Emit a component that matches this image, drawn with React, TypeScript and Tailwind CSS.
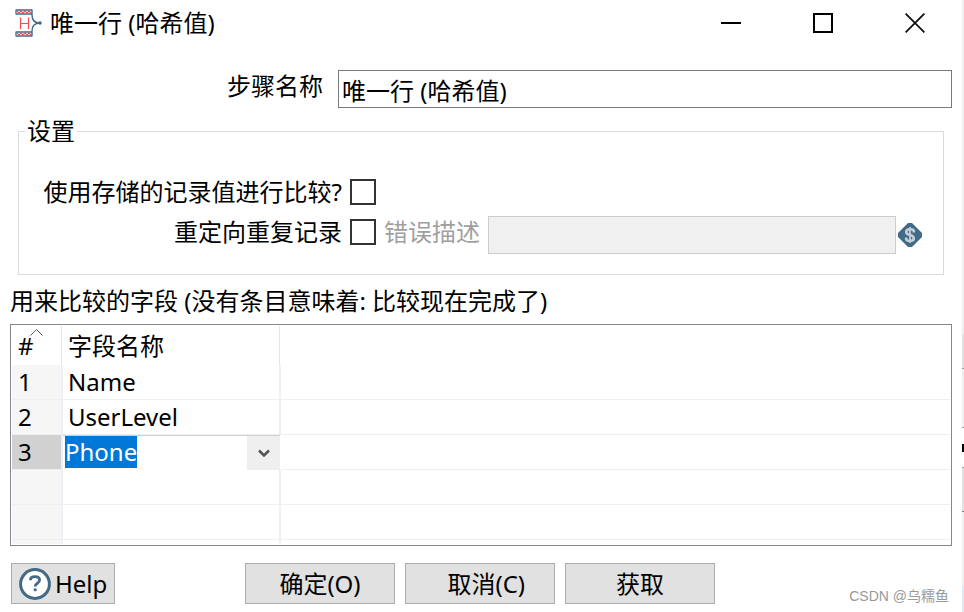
import { useEffect, useRef, useState } from "react";
import type { ReactNode } from "react";

const fields = ["Name", "UserLevel"];

const StepIcon = () => (
  <svg width="28" height="28" viewBox="0 0 28 28" fill="none" aria-hidden="true">
    <path d="M1 1H17M1 5H17M1 23H17M1 27H17M1 0.5V5.5M1 22.5V27.5" stroke="#426a86" strokeWidth="1.3" />
    <path d="M2 2L4 4L6 2L8 4L10 2L12 4L14 2L16 4" stroke="#fb4b50" strokeWidth="1.1" />
    <path d="M2 24L4 26L6 24L8 26L10 24L12 26L14 24L16 26" stroke="#fb4b50" strokeWidth="1.1" />
    <path d="M17 0.5V6C17 11 19 14 25 14C19 14 17 17 17 22V27.5" stroke="#426a86" strokeWidth="1.4" />
    <circle cx="25" cy="14" r="1.8" fill="#426a86" />
    <path d="M5.5 8.5V20M13.5 8.5V20M5.5 14.5H13.5" stroke="#fb4b50" strokeWidth="1.2" />
  </svg>
);

const VariableIcon = () => (
  <svg width="24" height="24" viewBox="0 0 24 24" fill="none" aria-hidden="true">
    <path d="M10 0H14L24 10V14L14 24H10L0 14V10Z" fill="#426a86" />
    <path
      d="M15.8 9.6V8Q15.8 6.2 12 6.2Q8.2 6.2 8.2 9Q8.2 11.2 12 12Q15.8 12.8 15.8 15.2Q15.8 17.8 12 17.8Q8.2 17.8 8.2 16V14.6"
      stroke="#c3ced8"
      strokeWidth="2.6"
    />
    <path d="M12 4V20" stroke="#c3ced8" strokeWidth="1.8" />
  </svg>
);

const HelpIcon = () => (
  <svg width="32" height="32" viewBox="0 0 32 32" fill="none" aria-hidden="true">
    <circle cx="16" cy="16" r="14.4" fill="#fff" stroke="#426a86" strokeWidth="3" />
    <path
      d="M11.4 12.2Q11.4 8.6 16 8.6Q20.6 8.6 20.6 12Q20.6 13.8 18.4 15.2Q16.2 16.4 16.2 18.6"
      stroke="#426a86"
      strokeWidth="2.8"
    />
    <path d="M14.8 20.4H17.6V23.2H14.8Z" fill="#426a86" />
  </svg>
);

const TitleBar = () => (
  <header className="flex h-[46px] items-center pr-px">
    <div className="flex flex-1 items-center gap-[7px] pl-[15px]">
      <StepIcon />
      <h1>唯一行 (哈希值)</h1>
    </div>
    <button type="button" aria-label="最小化" className="flex h-full w-[92px] items-center justify-center">
      <span className="h-[2px] w-5 bg-black" />
    </button>
    <button type="button" aria-label="最大化" className="flex h-full w-[92px] items-center justify-center">
      <span className="size-5 border-2 border-black" />
    </button>
    <button type="button" aria-label="关闭" className="flex h-full w-[92px] items-center justify-center">
      <svg width="20" height="20" viewBox="0 0 20 20" stroke="#111" strokeWidth="1.8" aria-hidden="true">
        <path d="M0.6 0.6L19.4 19.4M19.4 0.6L0.6 19.4" />
      </svg>
    </button>
  </header>
);

const Settings = () => {
  const box = "size-[26px] appearance-none border-2 border-[#333] bg-white checked:bg-[#333]";

  return (
    <fieldset className="mx-[18px] border border-[#dcdcdc] pb-[22px] pr-[21px]">
      <legend className="ml-[6px] px-[2px] leading-8">设置</legend>
      <div className="mt-[25px] flex h-10 items-center gap-2">
        <label htmlFor="compare-stored" className="w-[323px] text-right">使用存储的记录值进行比较?</label>
        <input id="compare-stored" type="checkbox" className={box} />
      </div>
      <div className="flex h-10 items-center gap-2">
        <label htmlFor="redirect" className="w-[323px] text-right">重定向重复记录</label>
        <input id="redirect" type="checkbox" className={box} />
        <label htmlFor="error-desc" className="text-[#a0a0a0]">错误描述</label>
        <div className="mt-[5px] flex flex-1 items-center gap-[2px]">
          <input
            id="error-desc"
            disabled
            className="h-[38px] min-w-0 flex-1 border border-[#ccc] bg-[#f0f0f0] px-[3px]"
          />
          <VariableIcon />
        </div>
      </div>
    </fieldset>
  );
};

const FieldsTable = () => {
  const [value, setValue] = useState("Phone");
  const editor = useRef<HTMLInputElement>(null);

  useEffect(() => {
    editor.current?.focus();
    editor.current?.select();
  }, []);

  const index = "border-b border-r-2 border-b-[#efefef] border-r-[#edeff6] bg-[#f6f6f6] p-0 pl-[6px]";
  const name = "border-b border-r-2 border-b-[#efefef] border-r-[#edeff6] p-0 pl-[5px]";
  const rest = "border-b border-[#efefef] p-0";

  return (
    <div className="mx-[10px] border border-[#828790] p-px">
      <table aria-labelledby="fields-title" className="w-full table-fixed border-separate border-spacing-0 text-left">
        <colgroup>
          <col className="w-[51px]" />
          <col className="w-[218px]" />
          <col />
        </colgroup>
        <thead>
          <tr className="h-[39px]">
            <th className="p-0 pr-px font-normal">
              <div className="border-r border-[#e5e5e5] pl-[6px] leading-[39px]">
                <span className="relative">
                  #
                  <svg className="absolute left-3 top-0" width="13" height="7" viewBox="0 0 13 7" fill="none" stroke="#555" aria-hidden="true">
                    <path d="M0.5 6.5L6.5 0.5L12.5 6.5" />
                  </svg>
                </span>
              </div>
            </th>
            <th className="p-0 pr-px font-normal">
              <div className="border-r border-[#e5e5e5] pl-[5px] leading-[39px]">字段名称</div>
            </th>
            <td />
          </tr>
        </thead>
        <tbody>
          {fields.map((field, i) => (
            <tr key={field} className="h-[35px]">
              <td className={index}>{i + 1}</td>
              <td className={name}>{field}</td>
              <td className={rest} />
            </tr>
          ))}
          <tr className="h-[35px]">
            <td className="border-b border-r-2 border-b-[#efefef] border-r-[#edeff6] bg-[#d1d1d1] p-0 pl-[6px]">3</td>
            <td className="p-0 pr-px">
              <div className="flex h-[35px] border-t border-[#d0d0d0]">
                <input
                  ref={editor}
                  aria-label="字段名称"
                  value={value}
                  onChange={(e) => setValue(e.target.value)}
                  className="h-8 min-w-0 flex-1 pl-[2px] outline-none selection:bg-[#0078d7] selection:text-white"
                />
                <button type="button" aria-label="选择字段" className="flex w-[33px] items-center justify-center bg-[#efefef]">
                  <svg width="12" height="9" viewBox="0 0 12 9" fill="none" stroke="#555" strokeWidth="2.6" aria-hidden="true">
                    <path d="M1 1.5L6 6.5L11 1.5" />
                  </svg>
                </button>
              </div>
            </td>
            <td className={rest} />
          </tr>
          {[4, 5].map((row) => (
            <tr key={row} className="h-[35px]">
              <td className={index} />
              <td className={name} />
              <td className={rest} />
            </tr>
          ))}
          <tr className="h-1">
            <td className="border-r-2 border-[#edeff6] bg-[#f6f6f6] p-0" />
            <td className="border-r-2 border-[#edeff6] p-0" />
            <td className="p-0" />
          </tr>
        </tbody>
      </table>
    </div>
  );
};

const DialogButton = ({ children }: { children: ReactNode }) => (
  <button type="button" className="h-[41px] w-[150px] border border-[#adadad] bg-[#e1e1e1]">
    {children}
  </button>
);

const App = () => {
  return (
    <div className="flex min-h-screen bg-white font-['Noto_Sans','Noto_Sans_CJK_SC',sans-serif] text-2xl leading-8 text-black">
      <main className="min-w-0 flex-1">
        <TitleBar />

        <div className="mt-6 flex items-start gap-[15px] pr-[10px]">
          <label htmlFor="step-name" className="w-[323px] text-right">步骤名称</label>
          <input
            id="step-name"
            defaultValue="唯一行 (哈希值)"
            className="h-[38px] min-w-0 flex-1 border border-[#7a7a7a] px-[3px]"
          />
        </div>

        <div className="mt-[7px]">
          <Settings />
        </div>

        <h2 id="fields-title" className="mb-[7px] mt-[10px] pl-[10px]">
          用来比较的字段 (没有条目意味着: 比较现在完成了)
        </h2>
        <FieldsTable />

        <footer className="mt-[17px] grid grid-cols-[1fr_auto_1fr] pl-[11px] pr-[13px]">
          <div>
            <button type="button" className="flex h-[41px] items-center gap-1 border border-[#adadad] bg-[#e1e1e1] px-[7px]">
              <HelpIcon />
              Help
            </button>
          </div>
          <div className="flex gap-[10px]">
            <DialogButton>确定(O)</DialogButton>
            <DialogButton>&nbsp;&nbsp;取消(C)</DialogButton>
            <DialogButton>获取</DialogButton>
          </div>
          <p className="self-end text-right font-['Liberation_Sans','Noto_Sans_CJK_SC',sans-serif] text-sm leading-4 text-[#999]">
            CSDN @乌糯鱼
          </p>
        </footer>
      </main>

      {/* edge of the window behind the dialog */}
      <div className="flex w-[2px] flex-col bg-[#f0f0f0]">
        <div className="h-[334px]" />
        <div className="h-[35px] border-b border-[#999] bg-[#e1e1e1]" />
        <div className="h-[59px] border-b border-[#999]" />
        <div className="flex h-10 items-center border-b border-[#999] bg-white">
          <span className="h-2 w-full bg-black" />
        </div>
        <div className="h-11 border-b border-[#777] bg-[#e1e1e1]" />
        <div className="flex-1" />
        <div className="h-[26px] bg-[#e2e8f4]" />
      </div>
    </div>
  );
};

export default App;
